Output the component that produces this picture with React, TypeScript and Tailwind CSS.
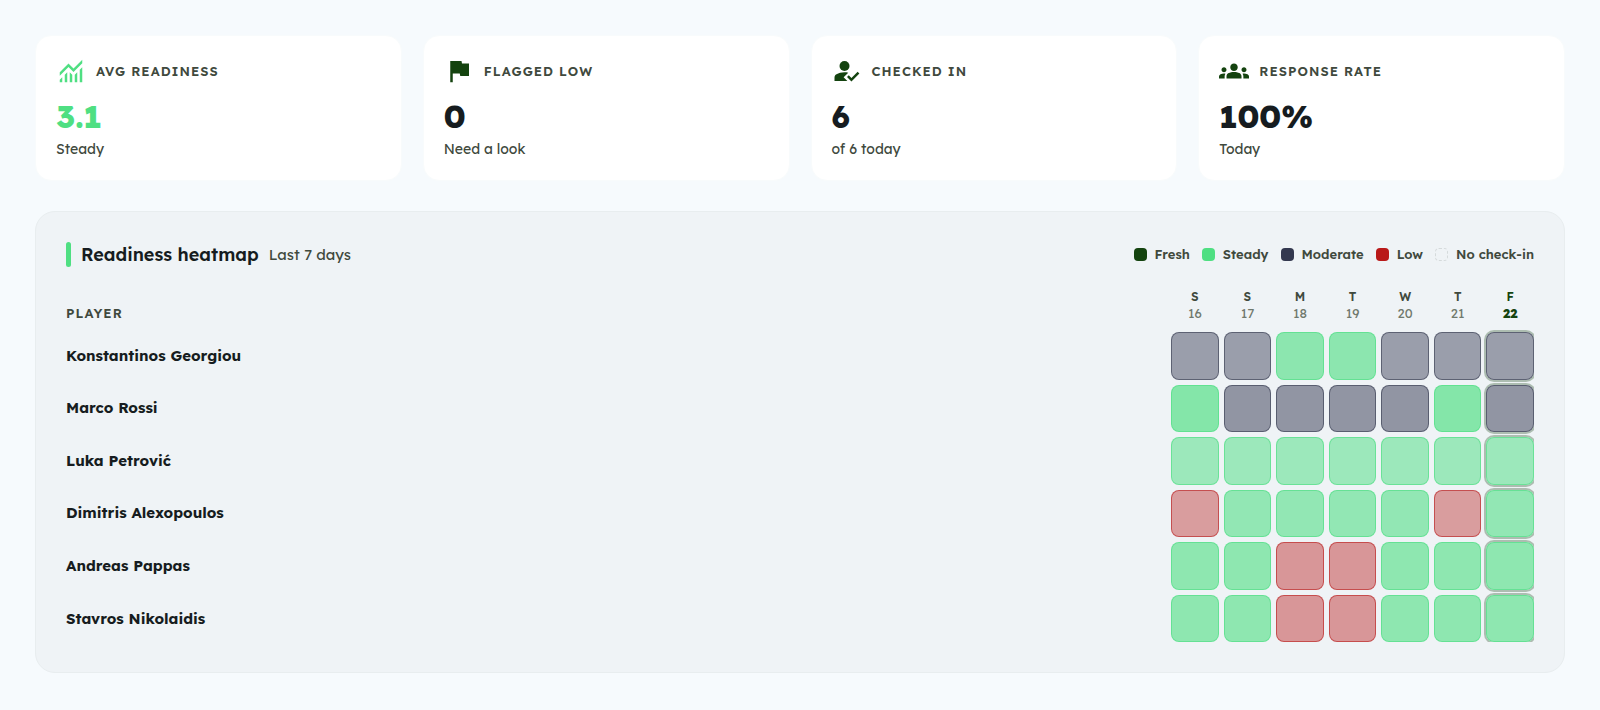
import type { ReactNode } from "react";
import { clsx } from "clsx";
import { MdFlag, MdGroups } from "react-icons/md";

type Level = "steady" | "moderate" | "low";

const DAYS = [
  { label: "S", date: 16 },
  { label: "S", date: 17 },
  { label: "M", date: 18 },
  { label: "T", date: 19 },
  { label: "W", date: 20 },
  { label: "T", date: 21 },
  { label: "F", date: 22, today: true },
];

const LEGEND = [
  { label: "Fresh", swatch: "bg-[#14430f]" },
  { label: "Steady", swatch: "bg-[#4fdf82]" },
  { label: "Moderate", swatch: "bg-[#33384f]" },
  { label: "Low", swatch: "bg-[#b91919]" },
  { label: "No check-in", swatch: "border border-dashed border-[#d5dadb]" },
];

const BORDERS: Record<Level, string> = {
  steady: "border-[#4ade80]/60",
  moderate: "border-[#33384f]/60",
  low: "border-[#b91c1c]/60",
};

// Fill strength varies per player, so each row carries its own tints.
const PLAYERS: { name: string; week: Level[]; fills: Partial<Record<Level, string>> }[] = [
  {
    name: "Konstantinos Georgiou",
    week: ["moderate", "moderate", "steady", "steady", "moderate", "moderate", "moderate"],
    fills: { moderate: "bg-[#33384f]/45", steady: "bg-[#4ade80]/60" },
  },
  {
    name: "Marco Rossi",
    week: ["steady", "moderate", "moderate", "moderate", "moderate", "steady", "moderate"],
    fills: { moderate: "bg-[#33384f]/50", steady: "bg-[#4ade80]/65" },
  },
  {
    name: "Luka Petrović",
    week: ["steady", "steady", "steady", "steady", "steady", "steady", "steady"],
    fills: { steady: "bg-[#4ade80]/50" },
  },
  {
    name: "Dimitris Alexopoulos",
    week: ["low", "steady", "steady", "steady", "steady", "low", "steady"],
    fills: { steady: "bg-[#4ade80]/56", low: "bg-[#b91c1c]/40" },
  },
  {
    name: "Andreas Pappas",
    week: ["steady", "steady", "low", "low", "steady", "steady", "steady"],
    fills: { steady: "bg-[#4ade80]/59", low: "bg-[#b91c1c]/43" },
  },
  {
    name: "Stavros Nikolaidis",
    week: ["steady", "steady", "low", "low", "steady", "steady", "steady"],
    fills: { steady: "bg-[#4ade80]/59", low: "bg-[#b91c1c]/43" },
  },
];

const ROW = "grid grid-cols-[1fr_repeat(7,3.24%)] gap-[5px]";

function MonitoringIcon() {
  return (
    <svg viewBox="0 -960 960 960" className="size-[30px]" fill="currentColor" aria-hidden="true">
      <path d="M120-120v-80l80-80v160h-80Zm160 0v-240l80-80v320h-80Zm160 0v-320l80 81v239h-80Zm160 0v-239l80-80v319h-80Zm160 0v-400l80-80v480h-80ZM120-327v-113l280-280 160 160 280-280v113L560-447 400-607 120-327Z" />
    </svg>
  );
}

function CheckedInIcon() {
  return (
    <svg viewBox="0 -960 960 960" className="size-[30px]" fill="currentColor" aria-hidden="true">
      <path d="M400-480q-66 0-113-47t-47-113q0-66 47-113t113-47q66 0 113 47t47 113q0 66-47 113t-113 47Z" />
      <path d="M80-160v-112q0-33 17-62t47-44q51-26 115-44t141-18q30 0 60 3t60 9L372-280l120 120H80Z" />
      <path d="M622-144 480-286l56-56 86 86 198-198 56 56-254 254Z" />
    </svg>
  );
}

function StatCard({
  icon,
  label,
  value,
  note,
  accent,
}: {
  icon: ReactNode;
  label: string;
  value: string;
  note: string;
  accent?: boolean;
}) {
  return (
    <section className="rounded-2xl border border-[#f8fbfc] bg-white p-5">
      <div className={clsx("flex items-center gap-[10px]", accent ? "text-[#4fdf82]" : "text-[#14430f]")}>
        {icon}
        <h2 className="text-[13px] leading-[30px] font-semibold tracking-[0.08em] text-[#40493d] uppercase">
          {label}
        </h2>
      </div>
      <p
        className={clsx(
          "mt-[13px] text-[31px] leading-[36px] font-extrabold",
          accent ? "text-[#4fdf82]" : "text-[#161c20]"
        )}
      >
        {value}
      </p>
      <p className="mt-[3px] text-[14px] leading-[22px] text-[#40493d]">{note}</p>
    </section>
  );
}

export default function App() {
  return (
    <main className="min-h-screen bg-[#f6fafd] p-[35px] font-['Lexend','Inter',sans-serif] text-[#161c20]">
      <div className="grid grid-cols-4 gap-[21px]">
        <StatCard icon={<MonitoringIcon />} label="Avg readiness" value="3.1" note="Steady" accent />
        <StatCard icon={<MdFlag className="size-[30px]" />} label="Flagged low" value="0" note="Need a look" />
        <StatCard icon={<CheckedInIcon />} label="Checked in" value="6" note="of 6 today" />
        <StatCard icon={<MdGroups className="size-[30px]" />} label="Response rate" value="100%" note="Today" />
      </div>

      <section className="mt-[30px] rounded-[20px] border border-[#e8edef] bg-[#eff3f6] p-[30px]">
        <header className="flex items-center justify-between">
          <div className="flex items-center gap-[10px]">
            <span className="h-[25px] w-[5px] rounded-sm bg-[#4fdf82]" />
            <h2 className="text-[18px] leading-[25px] font-semibold">Readiness heatmap</h2>
            <span className="text-[15px] leading-[25px] text-[#40493d]">Last 7 days</span>
          </div>
          <ul className="flex items-center gap-3 text-[13px] leading-[25px] font-semibold text-[#40493d]">
            {LEGEND.map((item) => (
              <li key={item.label} className="flex items-center gap-2">
                <span className={clsx("size-[13px] rounded", item.swatch)} />
                {item.label}
              </li>
            ))}
          </ul>
        </header>

        <div className="mt-[21px] overflow-hidden">
          <table className="block">
            <thead className="block">
              <tr className={clsx(ROW, "items-end")}>
                <th className="text-left text-[13px] leading-[17px] font-semibold tracking-[0.08em] text-[#40493d]">
                  PLAYER
                </th>
                {DAYS.map((day) => (
                  <th
                    key={day.date}
                    className={clsx("text-[12px] leading-[17px]", day.today ? "text-[#14430f]" : "text-[#40493d]")}
                  >
                    <span className="block font-semibold">{day.label}</span>
                    <span
                      className={clsx("block text-[13px]", day.today ? "font-extrabold" : "font-normal text-[#70796d]")}
                    >
                      {day.date}
                    </span>
                  </th>
                ))}
              </tr>
            </thead>
            <tbody className="mt-[10px] flex flex-col gap-[5px]">
              {PLAYERS.map((player) => (
                <tr key={player.name} className={clsx(ROW, "items-center")}>
                  <th scope="row" className="text-left text-[15px] leading-[24px] font-bold">
                    {player.name}
                  </th>
                  {player.week.map((level, i) => (
                    <td
                      key={i}
                      aria-label={level}
                      className={clsx(
                        "aspect-square rounded-lg border",
                        BORDERS[level],
                        player.fills[level],
                        DAYS[i].today && "ring-2 ring-[#14430f]/30"
                      )}
                    />
                  ))}
                </tr>
              ))}
            </tbody>
          </table>
        </div>
      </section>
    </main>
  );
}
